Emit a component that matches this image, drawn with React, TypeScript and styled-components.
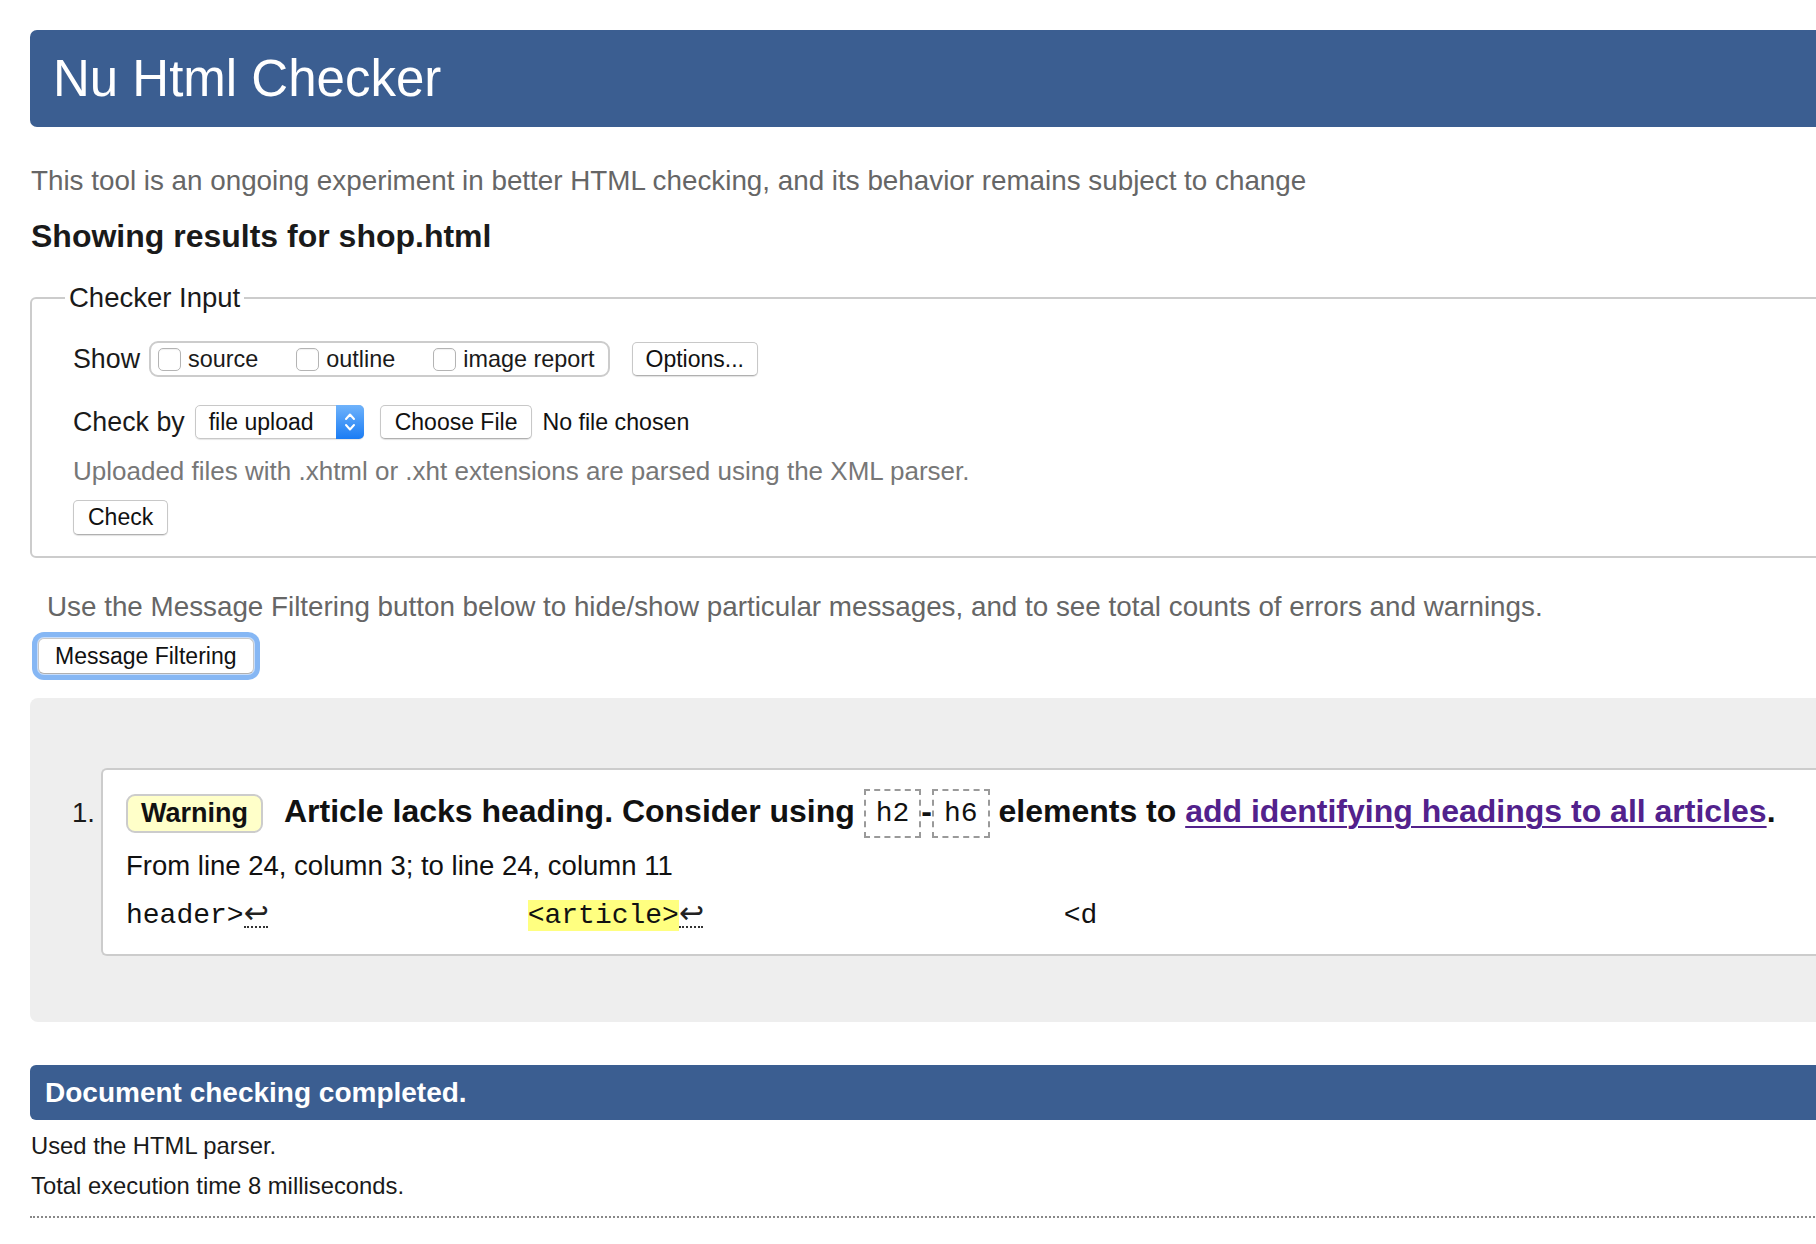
import styled, { createGlobalStyle } from "styled-components";

const GlobalStyle = createGlobalStyle`
  html, body {
    margin: 0;
    padding: 0;
    background: #fff;
    overflow-x: hidden;
  }
  body {
    font-family: "Liberation Sans", Arial, sans-serif;
    color: #1a1a1a;
  }
`;

const Page = styled.div`
  width: 1900px;
  padding: 30px 0 40px 30px;
`;

const Header = styled.header`
  height: 97px;
  background: #3b5e91;
  border-radius: 7px;
  display: flex;
  align-items: center;
  padding-left: 23px;
`;

const Title = styled.h1`
  margin: 0;
  font-size: 51px;
  font-weight: normal;
  color: #fff;
`;

const Intro = styled.p<{ $indent?: number; $top: number }>`
  margin: ${(p) => p.$top}px 0 0 ${(p) => p.$indent ?? 1}px;
  font-size: 27.8px;
  line-height: 32px;
  color: #666;
`;

const ResultsHeading = styled.h2`
  margin: 20px 0 0 1px;
  font-size: 32px;
  line-height: 38px;
  font-weight: bold;
  color: #1a1a1a;
`;

const Fieldset = styled.fieldset`
  margin: 27px 0 0;
  border: 2px solid #ccc;
  border-radius: 6px;
  padding: 27px 0 21px 41px;
  min-width: 0;
`;

const Legend = styled.legend`
  font-size: 27.5px;
  line-height: 32px;
  padding: 0 4px;
  margin-left: -8px;
  color: #1a1a1a;
`;

const Row = styled.div<{ $top?: number; $h: number }>`
  display: flex;
  align-items: center;
  height: ${(p) => p.$h}px;
  margin-top: ${(p) => p.$top ?? 0}px;
`;

const FieldLabel = styled.span`
  font-size: 26.8px;
  color: #1a1a1a;
  margin-right: 9px;
`;

const CheckGroup = styled.div`
  display: flex;
  align-items: center;
  gap: 38px;
  height: 36px;
  box-sizing: border-box;
  border: 2px solid #ccc;
  border-radius: 9px;
  padding: 0 13px 0 7px;
`;

const Option = styled.label`
  display: flex;
  align-items: center;
  gap: 7px;
  font-size: 23.4px;
  color: #1a1a1a;
`;

const Box = styled.input`
  appearance: none;
  width: 23px;
  height: 23px;
  margin: 0;
  border: 1px solid #b4b4b4;
  border-radius: 5px;
  background: #fff;
  box-shadow: inset 0 1px 1px rgba(0, 0, 0, 0.06);
`;

const Button = styled.button<{ $left?: number; $h?: number; $pad?: number }>`
  height: ${(p) => p.$h ?? 34}px;
  margin-left: ${(p) => p.$left ?? 0}px;
  padding: 0 ${(p) => p.$pad ?? 14}px;
  border: 1px solid #c8c8c8;
  border-bottom-color: #b0b0b0;
  border-radius: 5px;
  background: #fff;
  font-family: "Liberation Sans", Arial, sans-serif;
  font-size: 23px;
  color: #111;
  box-shadow: 0 1px 1px rgba(0, 0, 0, 0.12);
`;

const Select = styled.div`
  display: flex;
  align-items: center;
  justify-content: space-between;
  width: 169px;
  height: 34px;
  box-sizing: border-box;
  margin-left: 1px;
  border: 1px solid #c8c8c8;
  border-radius: 5px;
  background: #fff;
  font-size: 23px;
  color: #111;
  padding-left: 13px;
  box-shadow: 0 1px 1px rgba(0, 0, 0, 0.1);
`;

const SelectArrow = styled.span`
  width: 28px;
  height: 34px;
  margin: -1px -1px -1px 0;
  border-radius: 0 5px 5px 0;
  background: linear-gradient(#6fb3fb, #1a7cf4);
  display: flex;
  align-items: center;
  justify-content: center;
`;

const NoFile = styled.span`
  margin-left: 10px;
  font-size: 23.2px;
  color: #111;
`;

const Note = styled.p`
  margin: 17px 0 0;
  font-size: 26px;
  line-height: 30px;
  color: #777;
`;

const CheckWrap = styled.div`
  margin-top: 14px;
`;

const FocusButton = styled(Button)`
  margin: 15px 0 0 8px;
  display: block;
  height: 36px;
  padding: 0 16px;
  border-radius: 6px;
  box-shadow: 0 0 0 1px #c7ddfb, 0 0 0 6px #86b7f4;
`;

const Results = styled.ol`
  list-style: none;
  margin: 24px 0 0;
  padding: 70px 0 66px 42px;
  background: #eee;
  border-radius: 8px;
`;

const Item = styled.li`
  display: flex;
  align-items: flex-start;
`;

const Num = styled.span`
  width: 29px;
  flex: none;
  margin-top: 29px;
  font-size: 27.5px;
  line-height: 32px;
  color: #1a1a1a;
`;

const Card = styled.div`
  flex: 1;
  background: #fff;
  border: 2px solid #ccc;
  border-right: none;
  border-radius: 6px 0 0 6px;
  padding: 17px 0 21px 23px;
`;

const MessageLine = styled.p`
  margin: 0;
  font-size: 32px;
  line-height: 49px;
  font-weight: bold;
  white-space: nowrap;
  color: #111;
`;

const Badge = styled.span`
  display: inline-block;
  vertical-align: middle;
  height: 39px;
  box-sizing: border-box;
  line-height: 35px;
  border: 2px solid #ccc;
  border-radius: 9px;
  background: #ffffc9;
  padding: 0 13px;
  font-size: 27px;
  margin-right: 21px;
`;

const Code = styled.code`
  display: inline-block;
  vertical-align: middle;
  height: 49px;
  box-sizing: border-box;
  border: 2px dashed #9a9a9a;
  padding: 0 10px;
  font-family: "Liberation Mono", "Courier New", monospace;
  font-size: 28px;
  font-weight: normal;
  line-height: 45px;
`;

const Link = styled.a`
  color: #52218c;
  text-decoration: underline;
  text-underline-offset: 4px;
  text-decoration-thickness: 2px;
`;

const Location = styled.p`
  margin: 12px 0 0;
  font-size: 27.5px;
  line-height: 32px;
  color: #111;
`;

const Extract = styled.pre`
  margin: 17px 0 0;
  font-family: "Liberation Mono", "Courier New", monospace;
  font-size: 28px;
  line-height: 34px;
  color: #111;
`;

const Highlight = styled.b`
  font-weight: normal;
  background: #ffff80;
`;

const Ret = styled.span`
  display: inline-block;
  width: 24px;
  margin-right: 8px;
  border-bottom: 2px dotted #333;
  line-height: 26px;
  font-family: "DejaVu Sans", sans-serif;
  font-size: 30px;
  text-align: center;
  color: #222;
`;

const DoneBar = styled.div`
  margin-top: 43px;
  height: 55px;
  display: flex;
  align-items: center;
  padding-left: 15px;
  background: #3b5e91;
  border-radius: 6px;
  font-size: 28px;
  font-weight: bold;
  color: #fff;
`;

const Stat = styled.p<{ $top: number }>`
  margin: ${(p) => p.$top}px 0 0 1px;
  font-size: 23.8px;
  line-height: 30px;
  color: #1a1a1a;
`;

const DottedRule = styled.hr`
  margin: 15px 0 0;
  border: none;
  border-top: 2px dotted #888;
`;

const Chevrons = () => (
  <svg width="14" height="22" viewBox="0 0 14 22" fill="none">
    <path d="M3 8 L7 3.5 L11 8" stroke="#fff" strokeWidth="2" strokeLinecap="round" strokeLinejoin="round" />
    <path d="M3 14 L7 18.5 L11 14" stroke="#fff" strokeWidth="2" strokeLinecap="round" strokeLinejoin="round" />
  </svg>
);

export default function App() {
  return (
    <Page>
      <GlobalStyle />
      <Header>
        <Title>Nu Html Checker</Title>
      </Header>
      <Intro $top={38}>
        This tool is an ongoing experiment in better HTML checking, and its behavior remains subject to change
      </Intro>
      <ResultsHeading>Showing results for shop.html</ResultsHeading>

      <Fieldset>
        <Legend>Checker Input</Legend>
        <Row $h={36}>
          <FieldLabel>Show</FieldLabel>
          <CheckGroup>
            <Option>
              <Box type="checkbox" />
              source
            </Option>
            <Option>
              <Box type="checkbox" />
              outline
            </Option>
            <Option>
              <Box type="checkbox" />
              image report
            </Option>
          </CheckGroup>
          <Button $left={22} $pad={13}>Options...</Button>
        </Row>
        <Row $h={34} $top={28}>
          <FieldLabel>Check by</FieldLabel>
          <Select>
            file upload
            <SelectArrow>
              <Chevrons />
            </SelectArrow>
          </Select>
          <Button $left={16} $pad={14}>Choose File</Button>
          <NoFile>No file chosen</NoFile>
        </Row>
        <Note>Uploaded files with .xhtml or .xht extensions are parsed using the XML parser.</Note>
        <CheckWrap>
          <Button $h={35} $pad={14}>Check</Button>
        </CheckWrap>
      </Fieldset>

      <Intro $top={33} $indent={17}>
        Use the Message Filtering button below to hide/show particular messages, and to see total counts of errors and warnings.
      </Intro>
      <FocusButton>Message Filtering</FocusButton>

      <Results>
        <Item>
          <Num>1.</Num>
          <Card>
            <MessageLine>
              <Badge>Warning</Badge>
              Article lacks heading. Consider using <Code>h2</Code>-<Code>h6</Code> elements to{" "}
              <Link href="#">add identifying headings to all articles</Link>.
            </MessageLine>
            <Location>From line 24, column 3; to line 24, column 11</Location>
            <Extract>
              header&gt;<Ret>↩</Ret>
              {"               "}
              <Highlight>&lt;article&gt;</Highlight>
              <Ret>↩</Ret>
              {"                     "}&lt;d
            </Extract>
          </Card>
        </Item>
      </Results>

      <DoneBar>Document checking completed.</DoneBar>
      <Stat $top={11}>Used the HTML parser.</Stat>
      <Stat $top={10}>Total execution time 8 milliseconds.</Stat>
      <DottedRule />
    </Page>
  );
}
